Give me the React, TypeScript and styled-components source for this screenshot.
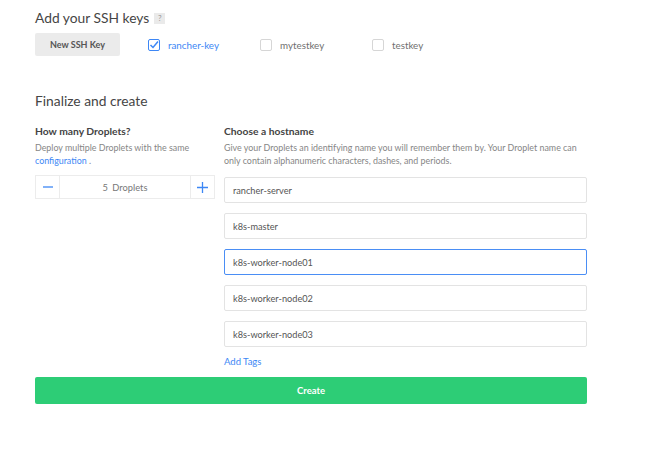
import React from "react";
import styled, { createGlobalStyle } from "styled-components";

const Global = createGlobalStyle`
  html, body { margin: 0; padding: 0; background: #fff; }
  body { font-family: Lato, "Open Sans", Arial, sans-serif; color: #444; }
  * { box-sizing: border-box; }
`;

const Page = styled.div`
  width: 665px;
  height: 467px;
  padding: 8px 0 0 35px;
`;

const Content = styled.div`
  width: 552px;
  display: flex;
  flex-direction: column;
`;

const SectionTitle = styled.h2<{ $top?: number }>`
  margin: ${(p) => p.$top ?? 0}px 0 0 0;
  font-size: 13.8px;
  line-height: 20px;
  font-weight: 400;
  color: #454545;
  display: flex;
  align-items: center;
  gap: 5px;
`;

const Help = styled.span`
  display: inline-flex;
  align-items: center;
  justify-content: center;
  width: 11px;
  height: 11px;
  background: #eaeaea;
  color: #999;
  font-size: 8px;
  line-height: 11px;
  margin-top: 1px;
`;

const KeyRow = styled.div`
  display: flex;
  align-items: center;
  margin-top: 5px;
`;

const GrayButton = styled.button`
  width: 85px;
  height: 23px;
  border: none;
  border-radius: 2px;
  background: #ebebeb;
  color: #555;
  font-family: Lato, "Open Sans", Arial, sans-serif;
  font-size: 9px;
  font-weight: 700;
  padding: 0;
  margin-right: 28px;
`;

const KeyItem = styled.label<{ $active?: boolean }>`
  width: 112px;
  display: flex;
  align-items: center;
  gap: 8px;
  font-size: 9.8px;
  color: ${(p) => (p.$active ? "#3d87f5" : "#707070")};
`;

const Box = styled.span<{ $checked?: boolean }>`
  width: 12px;
  height: 12px;
  border: 1px solid ${(p) => (p.$checked ? "#3d87f5" : "#d6d6d6")};
  border-radius: 2px;
  display: flex;
  align-items: center;
  justify-content: center;
  margin-top: 1px;
`;

const Columns = styled.div`
  display: grid;
  grid-template-columns: 180px 363px;
  column-gap: 9px;
  margin-top: 13px;
`;

const Column = styled.div`
  display: flex;
  flex-direction: column;
`;

const Label = styled.div`
  font-size: 10.3px;
  font-weight: 700;
  color: #444;
  line-height: 14px;
`;

const Desc = styled.p`
  margin: 3px 0 0 0;
  font-size: 8.9px;
  line-height: 13px;
  color: #868686;
`;

const Link = styled.a`
  color: #3d87f5;
  text-decoration: none;
`;

const Stepper = styled.div`
  margin-top: 8px;
  height: 24px;
  border: 1px solid #ececec;
  display: grid;
  grid-template-columns: 24px 1fr 24px;
`;

const StepBtn = styled.div<{ $side: "l" | "r" }>`
  display: flex;
  align-items: center;
  justify-content: center;
  ${(p) => (p.$side === "l" ? "border-right" : "border-left")}: 1px solid #ececec;
`;

const StepValue = styled.div`
  display: flex;
  align-items: center;
  justify-content: center;
  font-size: 9.3px;
  color: #777;
  word-spacing: 2px;
`;

const Inputs = styled.div`
  margin-top: 10px;
  display: flex;
  flex-direction: column;
  gap: 10px;
`;

const Input = styled.div<{ $focus?: boolean }>`
  height: 26px;
  border: 1px solid ${(p) => (p.$focus ? "#4a8ef5" : "#e3e3e3")};
  border-radius: 2px;
  padding-left: 8px;
  display: flex;
  align-items: center;
  font-size: 9.2px;
  color: #555;
`;

const AddTags = styled(Link)`
  font-size: 9.5px;
  margin-top: 9px;
  line-height: 12px;
`;

const Create = styled.button`
  margin-top: 9px;
  height: 27px;
  width: 552px;
  border: none;
  border-radius: 2px;
  background: #2dcd76;
  color: #fff;
  font-family: Lato, "Open Sans", Arial, sans-serif;
  font-size: 9.5px;
  font-weight: 700;
`;

const Check = () => (
  <svg width="10" height="10" viewBox="0 0 10 10">
    <path d="M1.5 5 L4 7.5 L9 1.5" fill="none" stroke="#3d87f5" strokeWidth="1.5" />
  </svg>
);

const Minus = () => (
  <svg width="10" height="10" viewBox="0 0 10 10">
    <path d="M0 5 H10" stroke="#3d87f5" strokeWidth="1.3" />
  </svg>
);

const Plus = () => (
  <svg width="11" height="11" viewBox="0 0 11 11">
    <path d="M0 5.5 H11 M5.5 0 V11" stroke="#3d87f5" strokeWidth="1.3" />
  </svg>
);

const hosts = ["rancher-server", "k8s-master", "k8s-worker-node01", "k8s-worker-node02", "k8s-worker-node03"];

export default function App() {
  return (
    <Page>
      <Global />
      <Content>
        <SectionTitle>
          Add your SSH keys <Help>?</Help>
        </SectionTitle>
        <KeyRow>
          <GrayButton>New SSH Key</GrayButton>
          <KeyItem $active>
            <Box $checked>
              <Check />
            </Box>
            rancher-key
          </KeyItem>
          <KeyItem>
            <Box />
            mytestkey
          </KeyItem>
          <KeyItem>
            <Box />
            testkey
          </KeyItem>
        </KeyRow>
        <SectionTitle $top={35}>Finalize and create</SectionTitle>
        <Columns>
          <Column>
            <Label>How many Droplets?</Label>
            <Desc>
              Deploy multiple Droplets with the same <Link>configuration</Link> .
            </Desc>
            <Stepper>
              <StepBtn $side="l">
                <Minus />
              </StepBtn>
              <StepValue>5 Droplets</StepValue>
              <StepBtn $side="r">
                <Plus />
              </StepBtn>
            </Stepper>
          </Column>
          <Column>
            <Label>Choose a hostname</Label>
            <Desc>
              Give your Droplets an identifying name you will remember them by. Your Droplet name can only contain
              alphanumeric characters, dashes, and periods.
            </Desc>
            <Inputs>
              {hosts.map((h, i) => (
                <Input key={h} $focus={i === 2}>
                  {h}
                </Input>
              ))}
            </Inputs>
            <AddTags>Add Tags</AddTags>
          </Column>
        </Columns>
        <Create>Create</Create>
      </Content>
    </Page>
  );
}
